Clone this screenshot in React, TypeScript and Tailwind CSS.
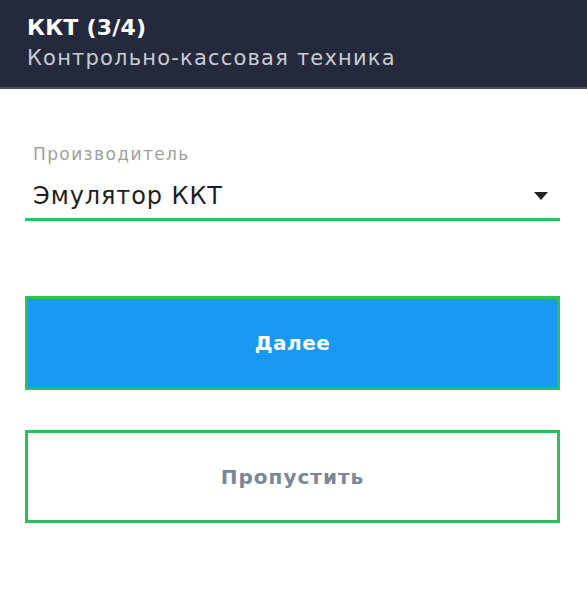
import React from 'react';

const font = { fontFamily: '"DejaVu Sans", "Open Sans", sans-serif' };

export default function App() {
  return (
    <div className="min-h-[600px] w-full bg-white" style={font}>
      {/* Шапка */}
      <div className="flex h-[89px] flex-col justify-center border-b-2 border-[#4a4f5c] bg-[#242a3c] px-[27px] pb-[2px]">
        <h1 className="text-[22px] font-bold leading-[30px] tracking-[0.2px] text-white">ККТ (3/4)</h1>
        <p className="text-[21px] font-normal leading-[30px] tracking-[1.2px] text-[#c9ccd3]">Контрольно-кассовая техника</p>
      </div>

      <div className="pl-[25px] pr-[27px] pt-[52px]">
        {/* Выбор производителя */}
        <div className="flex flex-col">
          <span className="pl-[8px] text-[17px] font-normal leading-[26px] tracking-[1.4px] text-[#a0a0a0]">Производитель</span>
          <div className="flex items-center justify-between border-b-[3px] border-[#2ec45c] pb-[5px] pl-[8px] pr-[12px] pt-[12px]">
            <span className="text-[24px] font-normal leading-[34px] tracking-[0.9px] text-[#1f1f1f]">Эмулятор ККТ</span>
            <svg width="14" height="8" viewBox="0 0 14 8">
              <path d="M0 0 L14 0 L7 8 Z" fill="#222" />
            </svg>
          </div>
        </div>

        {/* Кнопки */}
        <div className="mt-[75px] flex flex-col gap-[40px]">
          <button className="h-[94px] w-full border-[3px] border-[#2cc159] bg-[#1a99f2] text-[20px] font-bold tracking-[0.5px] text-white">
            Далее
          </button>
          <button className="h-[93px] w-full border-[3px] border-[#2cc159] bg-white text-[20px] font-bold tracking-[1px] text-[#7b8696]">
            Пропустить
          </button>
        </div>
      </div>
    </div>
  );
}
